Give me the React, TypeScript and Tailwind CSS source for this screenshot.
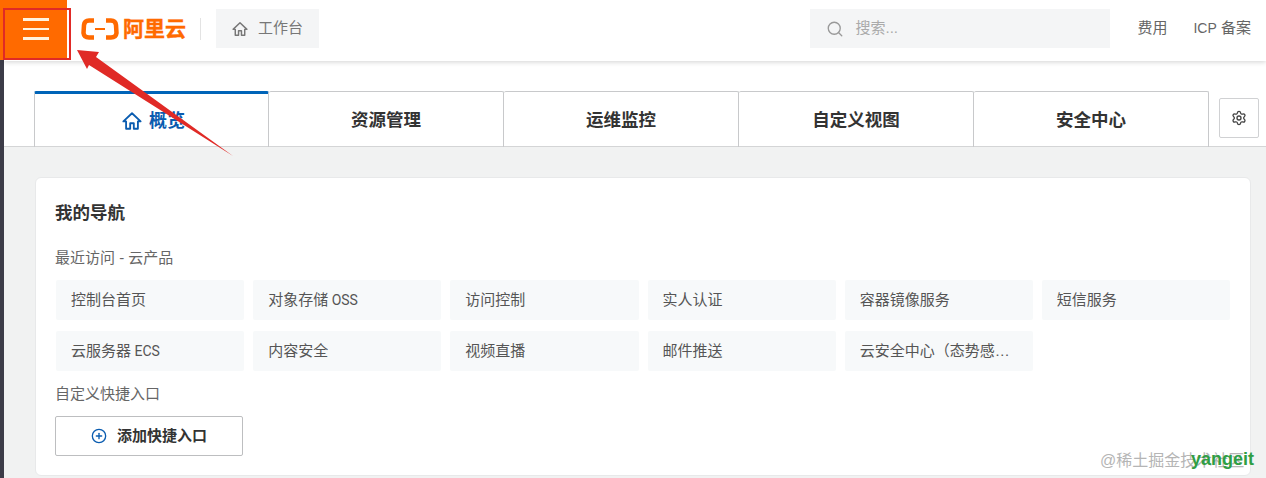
import { Search, Settings, CirclePlus } from 'lucide-react';

const tabs = ['资源管理', '运维监控', '自定义视图', '安全中心'];

const products = [
  { name: '控制台首页' },
  { name: '对象存储', suffix: 'OSS' },
  { name: '访问控制' },
  { name: '实人认证' },
  { name: '容器镜像服务' },
  { name: '短信服务' },
  { name: '云服务器', suffix: 'ECS' },
  { name: '内容安全' },
  { name: '视频直播' },
  { name: '邮件推送' },
  { name: '云安全中心（态势感知）' },
];

function HouseIcon({ className }: { className: string }) {
  return (
    <svg className={className} viewBox="0 0 22 22" fill="none" stroke="currentColor" strokeWidth="2" strokeLinejoin="round">
      <path d="M1.500 11.500L11 2.500L20.500 11.500H17.500V19.500H13V13.500H9V19.500H4.500V11.500Z" />
    </svg>
  );
}

export default function App() {
  return (
    <div
      className="relative flex h-[478px] w-[1266px] overflow-hidden bg-[#f1f2f2] text-[#333]"
      style={{ fontFamily: '"Liberation Sans", "Noto Sans CJK SC", sans-serif' }}
    >
      <aside className="w-1 shrink-0 bg-[#3c3c48]" />

      <main className="flex-1">
        {/* Top bar */}
        <header className="relative z-10 flex h-[61px] items-center bg-white pb-1 pr-[15px] shadow-[0_1px_5px_rgba(0,0,0,0.18)]">
          <div className="-ml-1 flex h-[60px] w-[67px] flex-col gap-[7px] self-start bg-[#ff6a00] pl-[23px] pt-[18px]">
            <span className="h-[2.500px] w-[26px] bg-[#fff3e0]" />
            <span className="h-[2.500px] w-[26px] bg-[#fff3e0]" />
            <span className="h-[2.500px] w-[26px] bg-[#fff3e0]" />
          </div>
          <div className="ml-[14px] flex items-center gap-1">
            <svg width="38" height="24" viewBox="0 0 38 24" fill="none" stroke="#ff6a00" strokeWidth="4.500">
              <path d="M13 3.500H8Q3.500 3.500 3 8L2.500 16Q3 20.500 8 20.500H13" />
              <path d="M25 3.500H30Q34.500 3.500 35 8L35.500 16Q35 20.500 30 20.500H25" />
              <path d="M14 12H24" strokeWidth="2" />
            </svg>
            <span className="text-[21px] leading-none font-bold text-[#ff6a00] [-webkit-text-stroke:0.4px_#ff6a00]">阿里云</span>
          </div>
          <div className="ml-[14px] h-[22px] w-px bg-[#e3e3e3]" />
          <div className="ml-[15px] flex h-[39px] w-[103px] items-center justify-center gap-[10px] bg-[#f4f5f6] text-[15px] text-[#777]">
            <HouseIcon className="size-4" />
            <span>工作台</span>
          </div>
          <div className="ml-auto flex h-[39px] w-[300px] items-center gap-[11px] bg-[#f4f5f6] pl-4 text-[15px] text-[#aaa]">
            <Search className="size-[18px] text-[#999]" strokeWidth={1.800} />
            <span>搜索...</span>
          </div>
          <span className="ml-[27px] text-[15px] text-[#666]">费用</span>
          <span className="ml-[26px] text-[15px] text-[#666]">
            <span className="text-sm">ICP</span> 备案
          </span>
        </header>

        {/* Tabs */}
        <div className="flex h-[86px] items-end border-b border-[#d4d5d6] bg-white pl-[30px]">
          <div className="-mb-px flex h-[56px] w-[235px] items-center justify-center gap-[7px] rounded-t-[2px] border-x border-t-[3px] border-x-[#c8c9cb] border-t-[#0064b8] pl-1 pt-px text-[#0a5cb0]">
            <HouseIcon className="size-[20px]" />
            <span className="text-lg font-bold">概览</span>
          </div>
          {tabs.map((tab) => (
            <div
              key={tab}
              className="-mb-px flex h-[56px] w-[235px] items-center justify-center rounded-t-[2px] border-t border-r border-[#c8c9cb] pt-[2px] text-[17.500px] font-bold"
            >
              {tab}
            </div>
          ))}
          <div className="mb-[8px] ml-[10px] flex size-[40px] items-center justify-center rounded-[2px] border border-[#d0d1d3]">
            <Settings className="size-[16px] text-[#444]" strokeWidth={2} />
          </div>
        </div>

        {/* Navigation card */}
        <section className="ml-[31px] mt-[30px] h-[299px] w-[1216px] rounded-[6px] border border-[#e8e9ea] bg-white pl-[19px] pt-[24px]">
          <h2 className="text-[17.500px] leading-[22px] font-bold">我的导航</h2>
          <p className="mt-[24px] text-[15px] leading-5 text-[#666]">最近访问 - 云产品</p>
          <div className="ml-px mt-[12px] grid w-[1174px] grid-cols-6 gap-x-[9px] gap-y-[11px]">
            {products.map((item) => (
              <div
                key={item.name}
                className="flex h-[40px] items-center rounded-[2px] bg-[#f7f9fa] px-[15px] text-[15px] text-[#555]"
              >
                <span className="truncate">
                  {item.name}
                  {item.suffix && <span className="font-[Roboto] text-sm"> {item.suffix}</span>}
                </span>
              </div>
            ))}
          </div>
          <p className="mt-[13px] text-[15px] leading-5 text-[#666]">自定义快捷入口</p>
          <button className="mt-[12px] flex h-[40px] w-[188px] items-center justify-center gap-[10px] rounded-[2px] border border-[#bdbec0] text-[15px] font-bold">
            <CirclePlus className="size-[16px] text-[#0a5cb0]" strokeWidth={2} />
            <span>添加快捷入口</span>
          </button>
        </section>
      </main>

      {/* Screenshot annotations */}
      <div className="absolute left-[3px] top-[8px] z-20 h-[52px] w-[68px] border-2 border-[#e02a26]" />
      <svg className="absolute left-0 top-0 z-20" width="300" height="170" viewBox="0 0 300 170">
        <path d="M77 50L99 52L96 57L233 156L89 65L87 69Z" fill="#e02a26" />
      </svg>
      <div className="absolute left-[1100px] top-[449px] z-20 text-base text-[#b5b5b5]">@稀土掘金技术社区</div>
      <div className="absolute left-[1191px] top-[446px] z-20 text-[18px] font-bold text-[#2f9e44]">yangeit</div>
    </div>
  );
}
